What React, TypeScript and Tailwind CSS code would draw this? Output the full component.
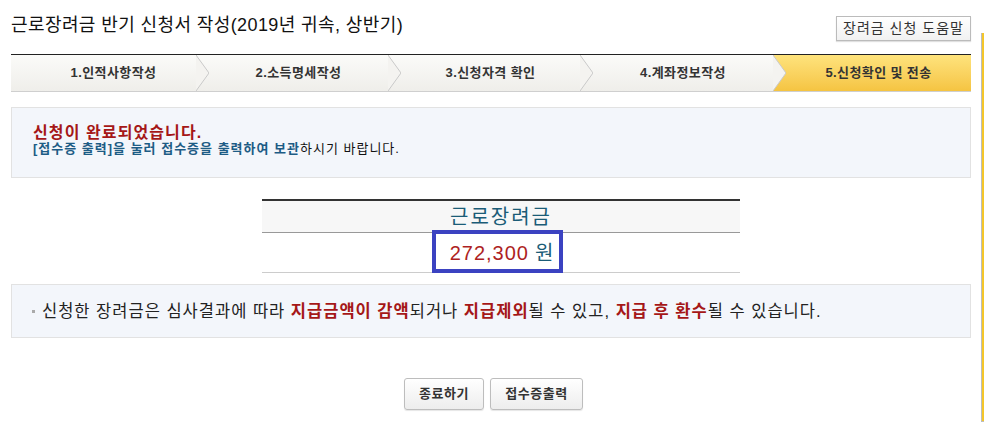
const FONT = { fontFamily: '"Liberation Sans", "Noto Sans CJK KR", sans-serif' };

const steps = [
  { label: "1.인적사항작성", w: "w-[185px]", pl: "pl-[20px]" },
  { label: "2.소득명세작성", w: "w-[192px]", pl: "pl-[13px]" },
  { label: "3.신청자격 확인", w: "w-[192px]", pl: "pl-[13px]" },
  { label: "4.계좌정보작성", w: "w-[193px]", pl: "pl-[13px]" },
];

const Chevron = () => (
  <svg className="absolute top-0 left-full z-10" width="13" height="36" viewBox="0 0 13 36">
    <polygon points="0,0 13,18 0,36" fill="#f4f3f0" />
    <polyline points="0,0 13,18 0,36" fill="none" stroke="#c9c9c9" strokeWidth="1" />
  </svg>
);

const StepBar = () => (
  <div className="flex h-[38px] border-t border-b border-t-[#222] border-b-[#cfcfcf]">
    {steps.map((s) => (
      <div
        key={s.label}
        className={`relative ${s.w} ${s.pl} flex items-center justify-center bg-linear-to-b from-[#fbfbf9] to-[#efeeea] text-[13px] tracking-[0.4px] font-bold text-[#333]`}
      >
        {s.label}
        <Chevron />
      </div>
    ))}
    <div className="flex-1 pl-[13px] flex items-center justify-center bg-linear-to-b from-[#fee37c] to-[#f5c441] text-[13px] tracking-[0.4px] font-bold text-[#333]">
      5.신청확인 및 전송
    </div>
  </div>
);

export default function App() {
  return (
    <div className="flex w-[984px] h-[441px] bg-white overflow-hidden" style={FONT}>
      <div className="w-[971px] pl-[11px]">
        <div className="flex justify-between h-[54px]">
          <h1 className="pt-[14px] leading-[22px] text-[18px] tracking-[0.4px] text-[#111]">
            근로장려금 반기 신청서 작성(2019년 귀속, 상반기)
          </h1>
          <button className="mt-[16px] h-[25px] w-[135px] border border-[#bbb] bg-linear-to-b from-white to-[#f1f1f1] text-[14px] tracking-[1px] text-[#333] shadow-[0_1px_1px_rgba(0,0,0,0.12)]">
            장려금 신청 도움말
          </button>
        </div>

        <StepBar />

        <div className="mt-[15px] h-[71px] border border-[#e2e2e2] bg-[#f3f6fb] pl-[21px] pt-[16px]">
          <p className="text-[16px] leading-[17px] font-bold tracking-[1.1px] text-[#a51717]">신청이 완료되었습니다.</p>
          <p className="text-[13px] leading-[15px] tracking-[1px] text-[#111]">
            <span className="font-bold text-[#1d5c85]">[접수증 출력]을 눌러 접수증을 출력하여 보관</span>
            하시기 바랍니다.
          </p>
        </div>

        <div className="relative mt-[21px] ml-[251px] w-[478px]">
          <div className="h-[34px] border-t-2 border-b border-t-[#333] border-b-[#999] bg-[#f7f7f7] flex items-center justify-center text-[20px] tracking-[2px] text-[#1b5c77]">
            근로장려금
          </div>
          <div className="h-[40px] border-b border-[#ccc] flex items-center justify-center text-[20px] tracking-[1px] pl-[2px]">
            <span className="text-[#ae1f23]">272,300</span>
            <span className="ml-[6px] text-[#1b5c77]">원</span>
          </div>
          <div className="absolute left-[170px] top-[31px] w-[131px] h-[43px] border-4 border-[#3b42c1]" />
        </div>

        <div className="mt-[11px] h-[54px] border border-[#e2e2e2] bg-[#f3f6fb] pl-[20px] flex items-center text-[16.5px] tracking-[1px] text-[#222]">
          <span className="w-[3px] h-[3px] bg-[#aaa] mr-[7px]" />
          <span>
            신청한 장려금은 심사결과에 따라 <b className="text-[#a51717]">지급금액이 감액</b>되거나{" "}
            <b className="text-[#a51717]">지급제외</b>될 수 있고, <b className="text-[#a51717]">지급 후 환수</b>될 수 있습니다.
          </span>
        </div>

        <div className="mt-[40px] ml-[393px] flex gap-[6px]">
          <button className="h-[32px] w-[80px] rounded-[3px] border border-[#bdbdbd] bg-linear-to-b from-white to-[#ededed] text-[13px] tracking-[0.5px] font-bold text-[#333] shadow-[0_1px_1px_rgba(0,0,0,0.1)]">
            종료하기
          </button>
          <button className="h-[32px] w-[93px] rounded-[3px] border border-[#bdbdbd] bg-linear-to-b from-white to-[#ededed] text-[13px] tracking-[0.5px] font-bold text-[#333] shadow-[0_1px_1px_rgba(0,0,0,0.1)]">
            접수증출력
          </button>
        </div>
      </div>
      <div className="ml-[10px] mt-[33px] w-[3px] h-[389px] border-l border-b border-[#bdbdbd] bg-[#f4c62a]" />
    </div>
  );
}
